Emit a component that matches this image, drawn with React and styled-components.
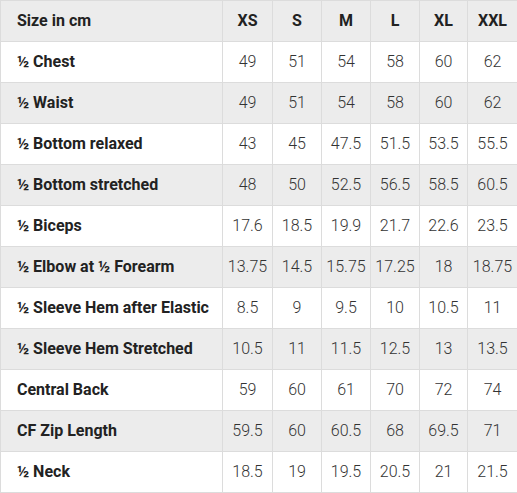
import React from "react";
import styled, { createGlobalStyle } from "styled-components";

const GlobalStyle = createGlobalStyle`
  html, body { margin: 0; padding: 0; background: #fff; }
  body { font-family: Roboto, "Liberation Sans", sans-serif; }
`;

const Table = styled.table`
  width: 517px;
  border-collapse: collapse;
  table-layout: fixed;
  font-size: 16px;
`;

const Row = styled.tr`
  height: 41px;
  background: ${(p) => (p.$shaded ? "#ececec" : "#fff")};
`;

const Head = styled.th`
  border: 1px solid #dcdcdc;
  padding: 0 0 2px;
  font-weight: 700;
  color: #222;
  text-align: center;
  &:first-child {
    text-align: left;
    padding-left: 16px;
  }
`;

const Label = styled.td`
  border: 1px solid #dcdcdc;
  padding: 0 0 2px 16px;
  font-weight: 700;
  color: #222;
  white-space: nowrap;
`;

const Cell = styled.td`
  border: 1px solid #dcdcdc;
  padding: 0 0 2px;
  text-align: center;
  font-weight: 300;
  color: #333;
`;

const sizes = ["XS", "S", "M", "L", "XL", "XXL"];
const widths = [222, 50, 49, 49, 49, 48, 50];

const rows = [
  ["½ Chest", 49, 51, 54, 58, 60, 62],
  ["½ Waist", 49, 51, 54, 58, 60, 62],
  ["½ Bottom relaxed", 43, 45, 47.5, 51.5, 53.5, 55.5],
  ["½ Bottom stretched", 48, 50, 52.5, 56.5, 58.5, 60.5],
  ["½ Biceps", 17.6, 18.5, 19.9, 21.7, 22.6, 23.5],
  ["½ Elbow at ½ Forearm", 13.75, 14.5, 15.75, 17.25, 18, 18.75],
  ["½ Sleeve Hem after Elastic", 8.5, 9, 9.5, 10, 10.5, 11],
  ["½ Sleeve Hem Stretched", 10.5, 11, 11.5, 12.5, 13, 13.5],
  ["Central Back", 59, 60, 61, 70, 72, 74],
  ["CF Zip Length", 59.5, 60, 60.5, 68, 69.5, 71],
  ["½ Neck", 18.5, 19, 19.5, 20.5, 21, 21.5],
];

export default function App() {
  return (
    <>
      <GlobalStyle />
      <Table>
        <colgroup>
          {widths.map((w, i) => (
            <col key={i} style={{ width: w }} />
          ))}
        </colgroup>
        <thead>
          <Row $shaded>
            <Head>Size in cm</Head>
            {sizes.map((s) => (
              <Head key={s}>{s}</Head>
            ))}
          </Row>
        </thead>
        <tbody>
          {rows.map(([label, ...vals], i) => (
            <Row key={label} $shaded={i % 2 === 1}>
              <Label>{label}</Label>
              {vals.map((v, j) => (
                <Cell key={j}>{v}</Cell>
              ))}
            </Row>
          ))}
        </tbody>
      </Table>
    </>
  );
}
